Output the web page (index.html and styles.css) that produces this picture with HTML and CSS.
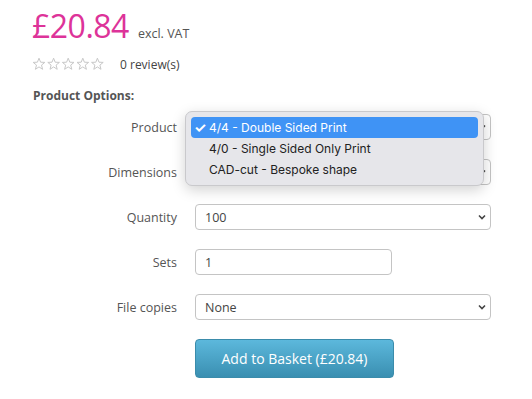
FILE: index.html
```html
<!DOCTYPE html>
<html lang="en">
<head>
    <meta charset="UTF-8">
    <title>Product</title>
    <link rel="stylesheet" href="styles.css">
</head>
<body>
    <div class="product">
        <div class="price-line">
            <span class="price">£20.84</span>
            <span class="vat">excl. VAT</span>
        </div>
        <div class="rating">
            <svg class="stars" width="74" height="14" viewBox="0 0 74 14">
                <g fill="none" stroke="#c8c8c8" stroke-width="1">
                    <path id="star" d="M7 1.2 L8.6 5.2 L12.8 5.4 L9.5 8.1 L10.6 12.3 L7 9.9 L3.4 12.3 L4.5 8.1 L1.2 5.4 L5.4 5.2 Z"/>
                    <use href="#star" x="14.6"/>
                    <use href="#star" x="29.2"/>
                    <use href="#star" x="43.8"/>
                    <use href="#star" x="58.4"/>
                </g>
            </svg>
            <span class="reviews">0 review(s)</span>
        </div>

        <h4 class="options-title">Product Options:</h4>

        <div class="options">
            <label class="opt-label">Product</label>
            <div class="field field-wide">
                <select class="control"><option>4/4 - Double Sided Print</option></select>
                <svg class="chevron" width="8" height="6" viewBox="0 0 8 6"><path d="M1 1.5 L4 4.5 L7 1.5" fill="none" stroke="#444" stroke-width="1.6"/></svg>
                <div class="menu">
                    <div class="menu-item selected"><span class="check">✓</span>4/4 - Double Sided Print</div>
                    <div class="menu-item">4/0 - Single Sided Only Print</div>
                    <div class="menu-item">CAD-cut - Bespoke shape</div>
                </div>
            </div>

            <label class="opt-label">Dimensions</label>
            <div class="field field-wide">
                <select class="control"><option>85 x 55mm</option></select>
                <svg class="chevron" width="8" height="6" viewBox="0 0 8 6"><path d="M1 1.5 L4 4.5 L7 1.5" fill="none" stroke="#444" stroke-width="1.6"/></svg>
            </div>

            <label class="opt-label">Quantity</label>
            <div class="field field-wide">
                <select class="control"><option>100</option></select>
                <svg class="chevron" width="8" height="6" viewBox="0 0 8 6"><path d="M1 1.5 L4 4.5 L7 1.5" fill="none" stroke="#444" stroke-width="1.6"/></svg>
            </div>

            <label class="opt-label">Sets</label>
            <div class="field field-short">
                <input class="control" type="text" value="1">
            </div>

            <label class="opt-label">File copies</label>
            <div class="field field-wide">
                <select class="control"><option>None</option></select>
                <svg class="chevron" width="8" height="6" viewBox="0 0 8 6"><path d="M1 1.5 L4 4.5 L7 1.5" fill="none" stroke="#444" stroke-width="1.6"/></svg>
            </div>

            <div></div>
            <div class="actions">
                <button class="basket-btn">Add to Basket (£20.84)</button>
            </div>
        </div>
    </div>
</body>
</html>
```

FILE: styles.css
```css
body, html {
    margin: 0;
    background-color: #ffffff;
    font-family: "Open Sans", Arial, sans-serif;
    color: #555;
}
.product {
    padding: 4px 0 0 32px;
    width: 460px;
}
.price-line {
    display: flex;
    align-items: baseline;
    height: 42px;
}
.price {
    font-size: 32px;
    color: #dd3399;
    letter-spacing: -0.5px;
}
.vat {
    font-size: 12.5px;
    color: #555;
    margin-left: 9px;
}
.rating {
    display: flex;
    align-items: center;
    margin-top: 10px;
    height: 16px;
}
.stars {
    display: block;
}
.reviews {
    font-size: 12px;
    margin-left: 14px;
    color: #444;
}
.options-title {
    font-size: 12px;
    font-weight: bold;
    color: #555;
    margin: 15px 0 0 1px;
    height: 16px;
}
.options {
    display: grid;
    grid-template-columns: 145px 296px;
    column-gap: 18px;
    row-gap: 19px;
    margin-top: 11px;
    align-items: center;
}
.opt-label {
    text-align: right;
    font-size: 12.5px;
    color: #555;
}
.field {
    position: relative;
    height: 26px;
}
.field-short {
    width: 197px;
}
.control {
    display: block;
    box-sizing: border-box;
    width: 100%;
    height: 26px;
    margin: 0;
    padding: 0 0 0 9px;
    border: 1px solid #c4c4c4;
    border-radius: 4px;
    background: #fff;
    font-family: "Open Sans", Arial, sans-serif;
    font-size: 12.5px;
    color: #444;
    appearance: none;
    -webkit-appearance: none;
}
.chevron {
    position: absolute;
    right: 5px;
    top: 10px;
}
.menu {
    position: absolute;
    left: -10px;
    top: -3px;
    width: 299px;
    box-sizing: border-box;
    padding: 5px 5px;
    background-color: #e6e6ea;
    border: 1px solid #c9c9cc;
    border-radius: 7px;
    box-shadow: 0 4px 14px rgba(0,0,0,0.18);
    font-family: Inter, "Liberation Sans", Arial, sans-serif;
    font-size: 12px;
    color: #222;
    z-index: 2;
}
.menu-item {
    height: 21px;
    line-height: 21px;
    padding-left: 18px;
    border-radius: 4px;
    position: relative;
}
.menu-item.selected {
    background-color: #3f93f5;
    color: #fff;
}
.check {
    position: absolute;
    left: 3px;
    top: 0;
    font-size: 14px;
    font-weight: bold;
}
.actions {
    margin-top: 0;
}
.basket-btn {
    width: 199px;
    height: 39px;
    border: 1px solid #3b8cab;
    border-radius: 4px;
    background: linear-gradient(#5cb8dc, #3a8fb1);
    color: #fff;
    font-family: "Open Sans", Arial, sans-serif;
    font-size: 14px;
    cursor: pointer;
}
```
